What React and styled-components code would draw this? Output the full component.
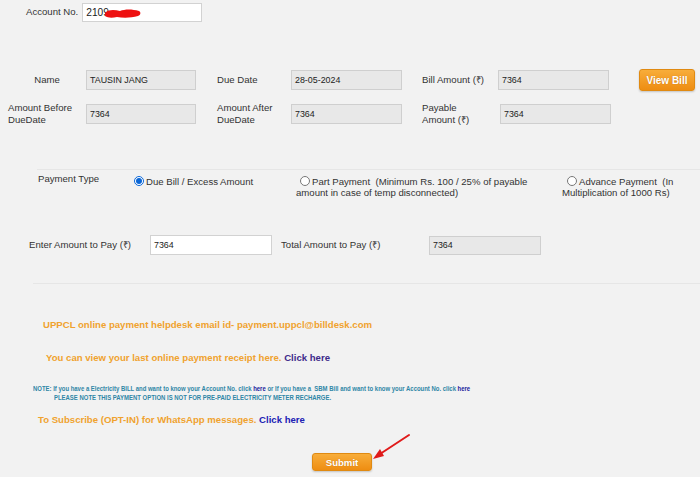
import React from "react";
import styled, { createGlobalStyle } from "styled-components";

const Global = createGlobalStyle`
  html, body { margin: 0; padding: 0; background: #f2f2f2; }
  body { font-family: "Liberation Sans", Arial, sans-serif; color: #333; }
  * { box-sizing: border-box; }
`;

const Page = styled.div`
  width: 700px;
  height: 477px;
  overflow: hidden;
  background: #f2f2f2;
  font-size: 9.6px;
  position: relative;
`;

const AccountRow = styled.div`
  display: flex;
  align-items: center;
  gap: 4px;
  padding: 3px 0 0 26px;
  height: 22px;
`;

const Label = styled.span`
  font-size: 9.6px;
  line-height: 12.5px;
  color: #333;
  justify-self: ${(p) => p.$align || "start"};
`;

const Field = styled.div`
  position: relative;
  width: ${(p) => p.$w || 110}px;
  height: ${(p) => p.$h || 20}px;
  background: ${(p) => (p.$ro ? "#e8e8e8" : "#ffffff")};
  border: 1px solid ${(p) => (p.$ro ? "#cfcfcf" : "#d2d2d2")};
  display: flex;
  align-items: center;
  padding-left: ${(p) => (p.$pl != null ? p.$pl : 3)}px;
  font-size: ${(p) => p.$fs || 8.9}px;
  color: #222;
`;

const Scribble = styled.svg`
  position: absolute;
  left: 21px;
  top: 3px;
`;

const BillGrid = styled.div`
  margin-top: 48px;
  padding-left: 8px;
  display: grid;
  grid-template-columns: 78px 131px 74px 131px 76px 141px auto;
  grid-auto-rows: 20px;
  row-gap: 14px;
  align-items: center;
`;

const OrangeButton = styled.button`
  width: ${(p) => p.$w}px;
  height: ${(p) => p.$h}px;
  border: 1px solid #e08a12;
  border-radius: 3px;
  background: linear-gradient(#f8ad3a, #ee8d12);
  color: #fff;
  font-family: "Liberation Sans", Arial, sans-serif;
  font-weight: bold;
  font-size: ${(p) => p.$fs || 10}px;
  text-shadow: 0 0 1px rgba(150, 80, 0, 0.5);
  box-shadow: 0 1px 2px rgba(0, 0, 0, 0.2);
  padding: 0;
  cursor: pointer;
`;

const Divider = styled.div`
  height: 1px;
  background: #e6e6e6;
  margin-left: ${(p) => p.$ml || 37}px;
  margin-top: ${(p) => p.$mt}px;
`;

const PayTypeGrid = styled.div`
  margin-top: 3px;
  padding-left: 38px;
  display: grid;
  grid-template-columns: 92px 166px 266px 1fr;
  align-items: start;
`;

const RadioCell = styled.label`
  font-size: 9.6px;
  line-height: 11px;
  color: #333;
  padding-right: ${(p) => p.$pr || 0}px;
  padding-top: 3px;
`;

const Radio = styled.input`
  width: 10px;
  height: 10px;
  margin: 0 2px 0 ${(p) => p.$ml || 4}px;
  vertical-align: -1px;
  accent-color: #0a66d6;
`;

const AmountRow = styled.div`
  margin-top: 37px;
  padding-left: 29px;
  display: flex;
  align-items: center;
  height: 20px;
`;

const Cell = styled.div`
  width: ${(p) => p.$w}px;
  margin-left: ${(p) => p.$ml || 0}px;
  display: flex;
  align-items: center;
`;

const InfoLine = styled.div`
  padding-left: ${(p) => p.$pl}px;
  margin-top: ${(p) => p.$mt}px;
  font-weight: bold;
  font-size: ${(p) => p.$fs || 9.6}px;
  line-height: ${(p) => p.$lh || 12}px;
  color: #f0a22e;
  white-space: nowrap;
`;

const Link = styled.span`
  color: ${(p) => p.$c || "#2a1f9a"};
`;

const NoteBlock = styled.div`
  margin-top: 20px;
`;

const Note = styled.div`
  margin-left: ${(p) => p.$pl}px;
  font-weight: bold;
  font-size: 7.4px;
  line-height: 9px;
  color: #2f86a6;
  white-space: nowrap;
  transform: scaleX(0.805);
  transform-origin: left center;
`;

const SubmitRow = styled.div`
  position: relative;
  margin-top: 27px;
  padding-left: 312px;
`;

const Arrow = styled.svg`
  position: absolute;
  left: 360px;
  top: -20px;
`;

export default function App() {
  return (
    <Page>
      <Global />
      <AccountRow>
        <Label>Account No.</Label>
        <Field $w={120} $h={19} $fs={10.2}>
          2109
          <Scribble width="38" height="12" viewBox="0 0 38 12">
            <path
              d="M1 6 C5 2, 11 3, 16 4 C21 2, 28 2, 35 4 C37 5, 37 8, 34 9 C27 11, 19 11, 13 10 C8 11, 4 11, 1 9 Z"
              fill="#ee1111"
            />
          </Scribble>
        </Field>
      </AccountRow>

      <BillGrid>
        <Label $align="center">Name</Label>
        <Field $ro>TAUSIN JANG</Field>
        <Label>Due Date</Label>
        <Field $ro $w={111}>28-05-2024</Field>
        <Label>Bill Amount (₹)</Label>
        <Field $ro $w={111}>7364</Field>
        <OrangeButton $w={56} $h={22}>View Bill</OrangeButton>

        <Label>
          Amount Before
          <br />
          DueDate
        </Label>
        <Field $ro>7364</Field>
        <Label>
          Amount After
          <br />
          DueDate
        </Label>
        <Field $ro $w={111}>7364</Field>
        <Label>
          Payable
          <br />
          Amount (₹)
        </Label>
        <Field $ro $w={111} style={{ marginLeft: 2 }}>7364</Field>
        <span />
      </BillGrid>

      <Divider $mt={45} />

      <PayTypeGrid>
        <Label>Payment Type</Label>
        <RadioCell>
          <Radio type="radio" name="pt" defaultChecked />
          Due Bill / Excess Amount
        </RadioCell>
        <RadioCell $pr={20}>
          <Radio type="radio" name="pt" />
          Part Payment&nbsp; (Minimum Rs. 100 / 25% of payable amount in case of temp disconnected)
        </RadioCell>
        <RadioCell $pr={8}>
          <Radio type="radio" name="pt" $ml={5} />
          Advance Payment&nbsp; (In Multiplication of 1000 Rs)
        </RadioCell>
      </PayTypeGrid>

      <AmountRow>
        <Cell $w={121}>
          <Label>Enter Amount to Pay (₹)</Label>
        </Cell>
        <Field $w={122}>7364</Field>
        <Cell $w={148} $ml={9}>
          <Label>Total Amount to Pay (₹)</Label>
        </Cell>
        <Field $ro $w={112} $h={19}>7364</Field>
      </AmountRow>

      <Divider $mt={28} $ml={33} />

      <InfoLine $pl={43} $mt={35}>
        UPPCL online payment helpdesk email id- payment.uppcl@billdesk.com
      </InfoLine>
      <InfoLine $pl={46} $mt={21}>
        You can view your last online payment receipt here. <Link $c="#3e2a8a">Click here</Link>
      </InfoLine>

      <NoteBlock>
        <Note $pl={33}>
          NOTE: If you have a Electricity BILL and want to know your Account No. click{" "}
          <Link $c="#1a1a9c">here</Link> or If you have a&nbsp; SBM Bill and want to know your Account No. click{" "}
          <Link $c="#1a1a9c">here</Link>
        </Note>
        <Note $pl={54}>PLEASE NOTE THIS PAYMENT OPTION IS NOT FOR PRE-PAID ELECTRICITY METER RECHARGE.</Note>
      </NoteBlock>

      <InfoLine $pl={38} $mt={12}>
        To Subscribe (OPT-IN) for WhatsApp messages. <Link $c="#2020b4">Click here</Link>
      </InfoLine>

      <SubmitRow>
        <OrangeButton $w={60} $h={18} $fs={9.6}>Submit</OrangeButton>
        <Arrow width="52" height="30" viewBox="0 0 52 30">
          <line x1="49" y1="2" x2="20" y2="21" stroke="#e01b1b" strokeWidth="2" strokeLinecap="round" />
          <polygon points="13,26 20,16 24,23" fill="#e01b1b" />
        </Arrow>
      </SubmitRow>
    </Page>
  );
}
